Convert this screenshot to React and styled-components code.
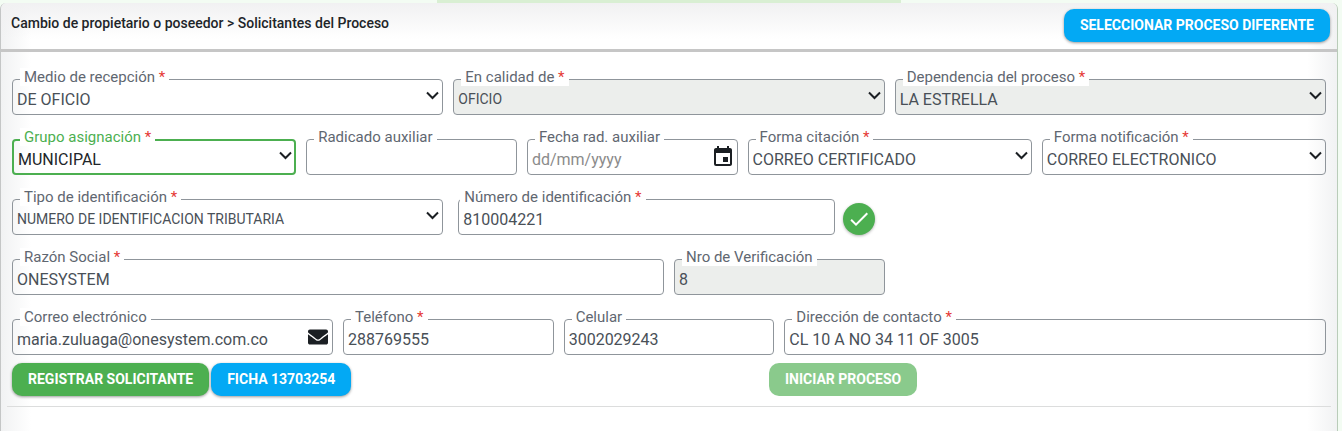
import { useState } from 'react';
import styled, { createGlobalStyle } from 'styled-components'
import { MdCheck, MdEvent } from 'react-icons/md';
import { FaEnvelope } from 'react-icons/fa';

const GlobalStyle = createGlobalStyle`
    * {
        box-sizing: border-box;
    }

    body {
        margin: 0;
        background-color: #f3fcf3;
        font-family: Roboto, "Liberation Sans", sans-serif;
        color: #212529;
    }
`;

const Page = styled.div`
    min-height: 100vh;
    display: flex;
    flex-direction: column;
    padding-right: 4px;
`;

const TopStrip = styled.div`
    width: 100%;
    max-width: 464px;
    height: 3px;
    margin: 0 auto;
    background-color: #d9efd3;
`;

const Card = styled.main`
    flex: 1;
    border-left: 1px solid #c4c6c6;
    border-right: 1px solid #b9ccb9;
    border-radius: 6px 6px 0 0;
    background: linear-gradient(to right, #f1f2f3, rgba(255, 255, 255, 0) 30px),
        linear-gradient(to left, #f1f2f3, rgba(255, 255, 255, 0) 30px),
        #ffffff;
`;

const Header = styled.header`
    display: flex;
    justify-content: space-between;
    align-items: flex-start;
    padding: 6px 7px 7px 10px;
    border-bottom: 3px solid #c6c6c6;
    border-radius: 6px 6px 0 0;
    background: linear-gradient(to bottom, #f1f1f2, rgba(255, 255, 255, 0) 36px);
`;

const Title = styled.h1`
    margin: 4px 0 0;
    font-size: 14px;
    line-height: 20px;
    font-weight: 500;
`;

const Button = styled.button`
    height: 33px;
    padding: 0 16px 2px;
    border: none;
    border-radius: 10px;
    background-color: ${(props) => (props.$color === "green" ? "#4caf50" : "#03a9f4")};
    color: white;
    font-family: inherit;
    font-size: 14px;
    font-weight: 700;
    text-transform: uppercase;
    cursor: pointer;
    box-shadow: 0 1px 3px rgba(0, 0, 0, 0.4);

    &:disabled {
        opacity: 0.65;
        box-shadow: none;
        cursor: default;
    }
`;

const Form = styled.form`
    padding: 27px 11px 0;
`;

const Row = styled.div`
    display: grid;
    grid-template-columns: repeat(36, minmax(0, 1fr));
    column-gap: 10px;
    margin-bottom: 24px;
`;

const Field = styled.div`
    position: relative;
    flex: 1;
    grid-column: span ${(props) => props.$span || 12};
`;

const Label = styled.label`
    position: absolute;
    top: -11px;
    left: 8px;
    padding: 0 4px;
    background-color: white;
    font-size: 15px;
    line-height: 18px;
    font-weight: 400;
    color: ${(props) => (props.$active ? "#4caf50" : "#5f6771")};
`;

const Required = styled.span`
    color: #e53935;
`;

const Input = styled.input`
    display: block;
    width: 100%;
    height: 36px;
    padding: 8px 4px 4px;
    padding-right: ${(props) => (props.$icon ? "34px" : "4px")};
    border: 1px solid #8f959b;
    border-radius: 4px;
    background-color: transparent;
    color: #495057;
    font-family: inherit;
    font-size: 16px;
    outline: none;

    &::placeholder {
        color: #8b8b8b;
        opacity: 1;
    }

    &:disabled {
        background-color: #eceeec;
        opacity: 1;
    }
`;

const Select = styled.select`
    display: block;
    width: 100%;
    height: 36px;
    padding: 8px 24px 4px 4px;
    border: ${(props) => (props.$active ? "2px solid #4caf50" : "1px solid #8f959b")};
    border-radius: 4px;
    background-color: transparent;
    color: ${(props) => (props.$active ? "#212529" : "#495057")};
    font-family: inherit;
    font-size: ${(props) => (props.$small ? "14px" : "16px")};
    appearance: none;
    outline: none;

    &:disabled {
        background-color: #eceeec;
        opacity: 1;
    }
`;

const Chevron = styled.svg`
    position: absolute;
    top: 12px;
    right: 4px;
    width: 13px;
    height: 9px;
    pointer-events: none;
`;

const IconButton = styled.button`
    position: absolute;
    top: 6px;
    right: 3px;
    display: flex;
    align-items: center;
    justify-content: center;
    width: 24px;
    height: 24px;
    padding: 0;
    border: none;
    background: none;
    color: #1b1f23;
    cursor: pointer;
`;

const FieldWithAction = styled.div`
    grid-column: span 12;
    display: flex;
    align-items: flex-end;
    gap: 8px;
    padding: 0 10px 0 5px;

    ${Label} {
        left: 2px;
    }
`;

const RoundButton = styled.button`
    display: flex;
    align-items: center;
    justify-content: center;
    width: 32px;
    height: 32px;
    padding: 0;
    border: none;
    border-radius: 50%;
    background-color: #4caf50;
    color: white;
    cursor: pointer;
    box-shadow: 0 1px 3px rgba(0, 0, 0, 0.3);
`;

const Actions = styled.div`
    display: grid;
    grid-template-columns: 757fr 557fr;
    margin-top: -16px;
`;

const ButtonGroup = styled.div`
    display: flex;
    gap: 2px;
`;

const Divider = styled.hr`
    margin: 10px 6px 0;
    border: none;
    border-top: 1px solid #dcdddd;
`;

const FieldLabel = ({ id, text, required, active }) => (
    <Label htmlFor={id} $active={active}>
        {text}
        {required && <Required> *</Required>}
    </Label>
)

const SelectField = ({ id, label, option, span, small, active, disabled }) => (
    <Field $span={span}>
        <Select id={id} $small={small} $active={active} disabled={disabled}>
            <option>{option}</option>
        </Select>
        <Chevron viewBox="0 0 13 9" fill="none" stroke="#1b1f23" strokeWidth="2">
            <path d="M1 1.5l5.5 5.5L12 1.5" />
        </Chevron>
        <FieldLabel id={id} text={label} required active={active} />
    </Field>
)

const TextField = ({ id, label, span, required, children, ...rest }) => (
    <Field $span={span}>
        <Input id={id} name={id} $icon={Boolean(children)} {...rest} />
        {children}
        <FieldLabel id={id} text={label} required={required} />
    </Field>
)

const App = () => {
const [value, setValue] = useState({
    radicado: "",
    fecha: "",
    numero: "810004221",
    razon: "ONESYSTEM",
    verificacion: "8",
    correo: "maria.zuluaga@onesystem.com.co",
    telefono: "288769555",
    celular: "3002029243",
    direccion: "CL 10 A NO 34 11 OF 3005",
})

const handleChange = (e) => {
    setValue({...value, [e.target.name]: e.target.value})
}

const field = (name) => ({ id: name, value: value[name], onChange: handleChange })

  return (
    <Page>
        <GlobalStyle />
        <TopStrip />
        <Card>
            <Header>
                <Title>Cambio de propietario o poseedor &gt; Solicitantes del Proceso</Title>
                <Button type="button">Seleccionar proceso diferente</Button>
            </Header>
            <Form onSubmit={(e) => e.preventDefault()}>
                <Row>
                    <SelectField id="medio" label="Medio de recepción" option="DE OFICIO" />
                    <SelectField id="calidad" label="En calidad de" option="OFICIO" small disabled />
                    <SelectField id="dependencia" label="Dependencia del proceso" option="LA ESTRELLA" disabled />
                </Row>
                <Row>
                    <SelectField id="grupo" label="Grupo asignación" option="MUNICIPAL" span={8} active />
                    <TextField {...field("radicado")} label="Radicado auxiliar" span={6} />
                    <TextField {...field("fecha")} label="Fecha rad. auxiliar" span={6} placeholder="dd/mm/yyyy">
                        <IconButton type="button" aria-label="Abrir calendario"><MdEvent size={24} /></IconButton>
                    </TextField>
                    <SelectField id="citacion" label="Forma citación" option="CORREO CERTIFICADO" span={8} />
                    <SelectField id="notificacion" label="Forma notificación" option="CORREO ELECTRONICO" span={8} />
                </Row>
                <Row>
                    <SelectField id="tipo" label="Tipo de identificación" option="NUMERO DE IDENTIFICACION TRIBUTARIA" small />
                    <FieldWithAction>
                        <TextField {...field("numero")} label="Número de identificación" required />
                        <RoundButton type="button" aria-label="Validar"><MdCheck size={24} /></RoundButton>
                    </FieldWithAction>
                </Row>
                <Row>
                    <TextField {...field("razon")} label="Razón Social" span={18} required />
                    <TextField {...field("verificacion")} label="Nro de Verificación" span={6} disabled />
                </Row>
                <Row>
                    <TextField {...field("correo")} label="Correo electrónico" span={9} type="email">
                        <IconButton type="button" aria-label="Enviar correo"><FaEnvelope size={20} /></IconButton>
                    </TextField>
                    <TextField {...field("telefono")} label="Teléfono" span={6} required />
                    <TextField {...field("celular")} label="Celular" span={6} />
                    <TextField {...field("direccion")} label="Dirección de contacto" span={15} required />
                </Row>
                <Actions>
                    <ButtonGroup>
                        <Button type="submit" $color="green">Registrar solicitante</Button>
                        <Button type="button">Ficha 13703254</Button>
                    </ButtonGroup>
                    <ButtonGroup>
                        <Button type="button" $color="green" disabled>Iniciar proceso</Button>
                    </ButtonGroup>
                </Actions>
            </Form>
            <Divider />
        </Card>
    </Page>
  )
}

export default App
